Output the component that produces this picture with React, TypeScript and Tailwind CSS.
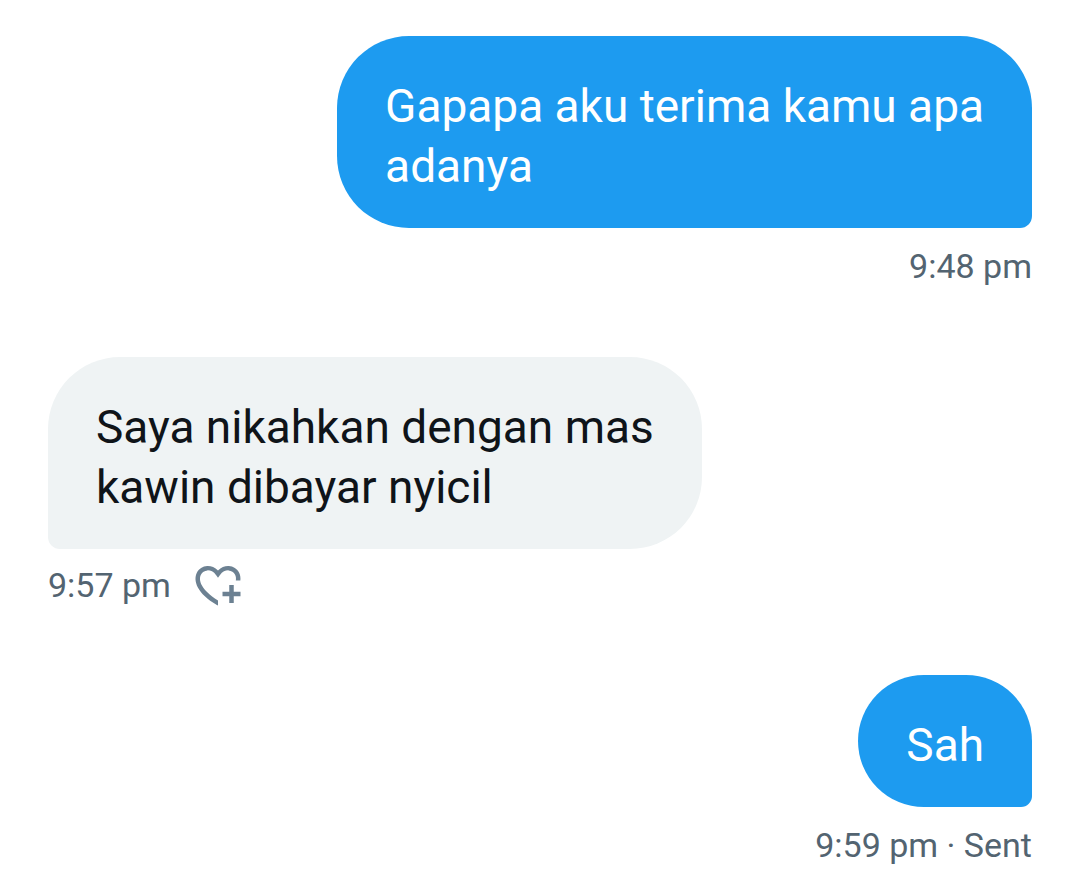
import type { ReactNode } from 'react';

type MessageProps = {
  side: 'sent' | 'received';
  time: string;
  children: ReactNode;
  action?: ReactNode;
};

function HeartPlus() {
  return (
    <svg viewBox="0 0 24 24" className="size-[54px]" fill="#6c8192" aria-hidden="true">
      <path d="M17 12v3h-2.998v2h3v3h2v-3h3v-2h-3.001v-3H17zm-5 6.839c-3.871-2.34-6.053-4.639-7.127-6.609-1.112-2.04-1.031-3.7-.479-4.82.561-1.13 1.667-1.84 2.91-1.91 1.222-.06 2.68.51 3.892 2.16l.806 1.09.805-1.09c1.211-1.65 2.668-2.22 3.89-2.16 1.242.07 2.347.78 2.908 1.91.334.677.49 1.554.321 2.59h2.011c.153-1.283-.039-2.469-.539-3.48-.887-1.79-2.647-2.91-4.601-3.01-1.65-.09-3.367.56-4.796 2.01-1.43-1.45-3.147-2.1-4.798-2.01-1.954.1-3.714 1.22-4.601 3.01-.896 1.81-.846 4.17.514 6.67 1.353 2.48 4.003 5.12 8.382 7.67l.502.299v-2.32z" />
    </svg>
  );
}

function Message({ side, time, children, action }: MessageProps) {
  const sent = side === 'sent';
  return (
    <article className={`flex flex-col ${sent ? 'items-end' : 'items-start'}`}>
      <p className={`rounded-[72px] px-12 pt-10 pb-8 text-[46px] leading-[60px] ${sent ? 'rounded-br-xl bg-[#1d9bf0] text-white' : 'rounded-bl-xl bg-[#eff3f4] text-[#0f1419]'}`}>
        {children}
      </p>
      <div className={`flex items-center gap-5 text-[34px] leading-10 text-[#536471] ${sent ? 'h-[75px]' : 'h-[72px]'}`}>
        <time>{time}</time>
        {action}
      </div>
    </article>
  );
}

export default function App() {
  return (
    <main className="flex flex-col gap-[54px] bg-white px-12 pt-9 font-[Roboto,sans-serif]">
      <Message side="sent" time="9:48 pm">Gapapa aku terima kamu apa<br />adanya</Message>
      <Message side="received" time="9:57 pm" action={<button aria-label="Add reaction"><HeartPlus /></button>}>
        Saya nikahkan dengan mas<br />kawin dibayar nyicil
      </Message>
      <Message side="sent" time="9:59 pm · Sent">Sah</Message>
    </main>
  );
}
